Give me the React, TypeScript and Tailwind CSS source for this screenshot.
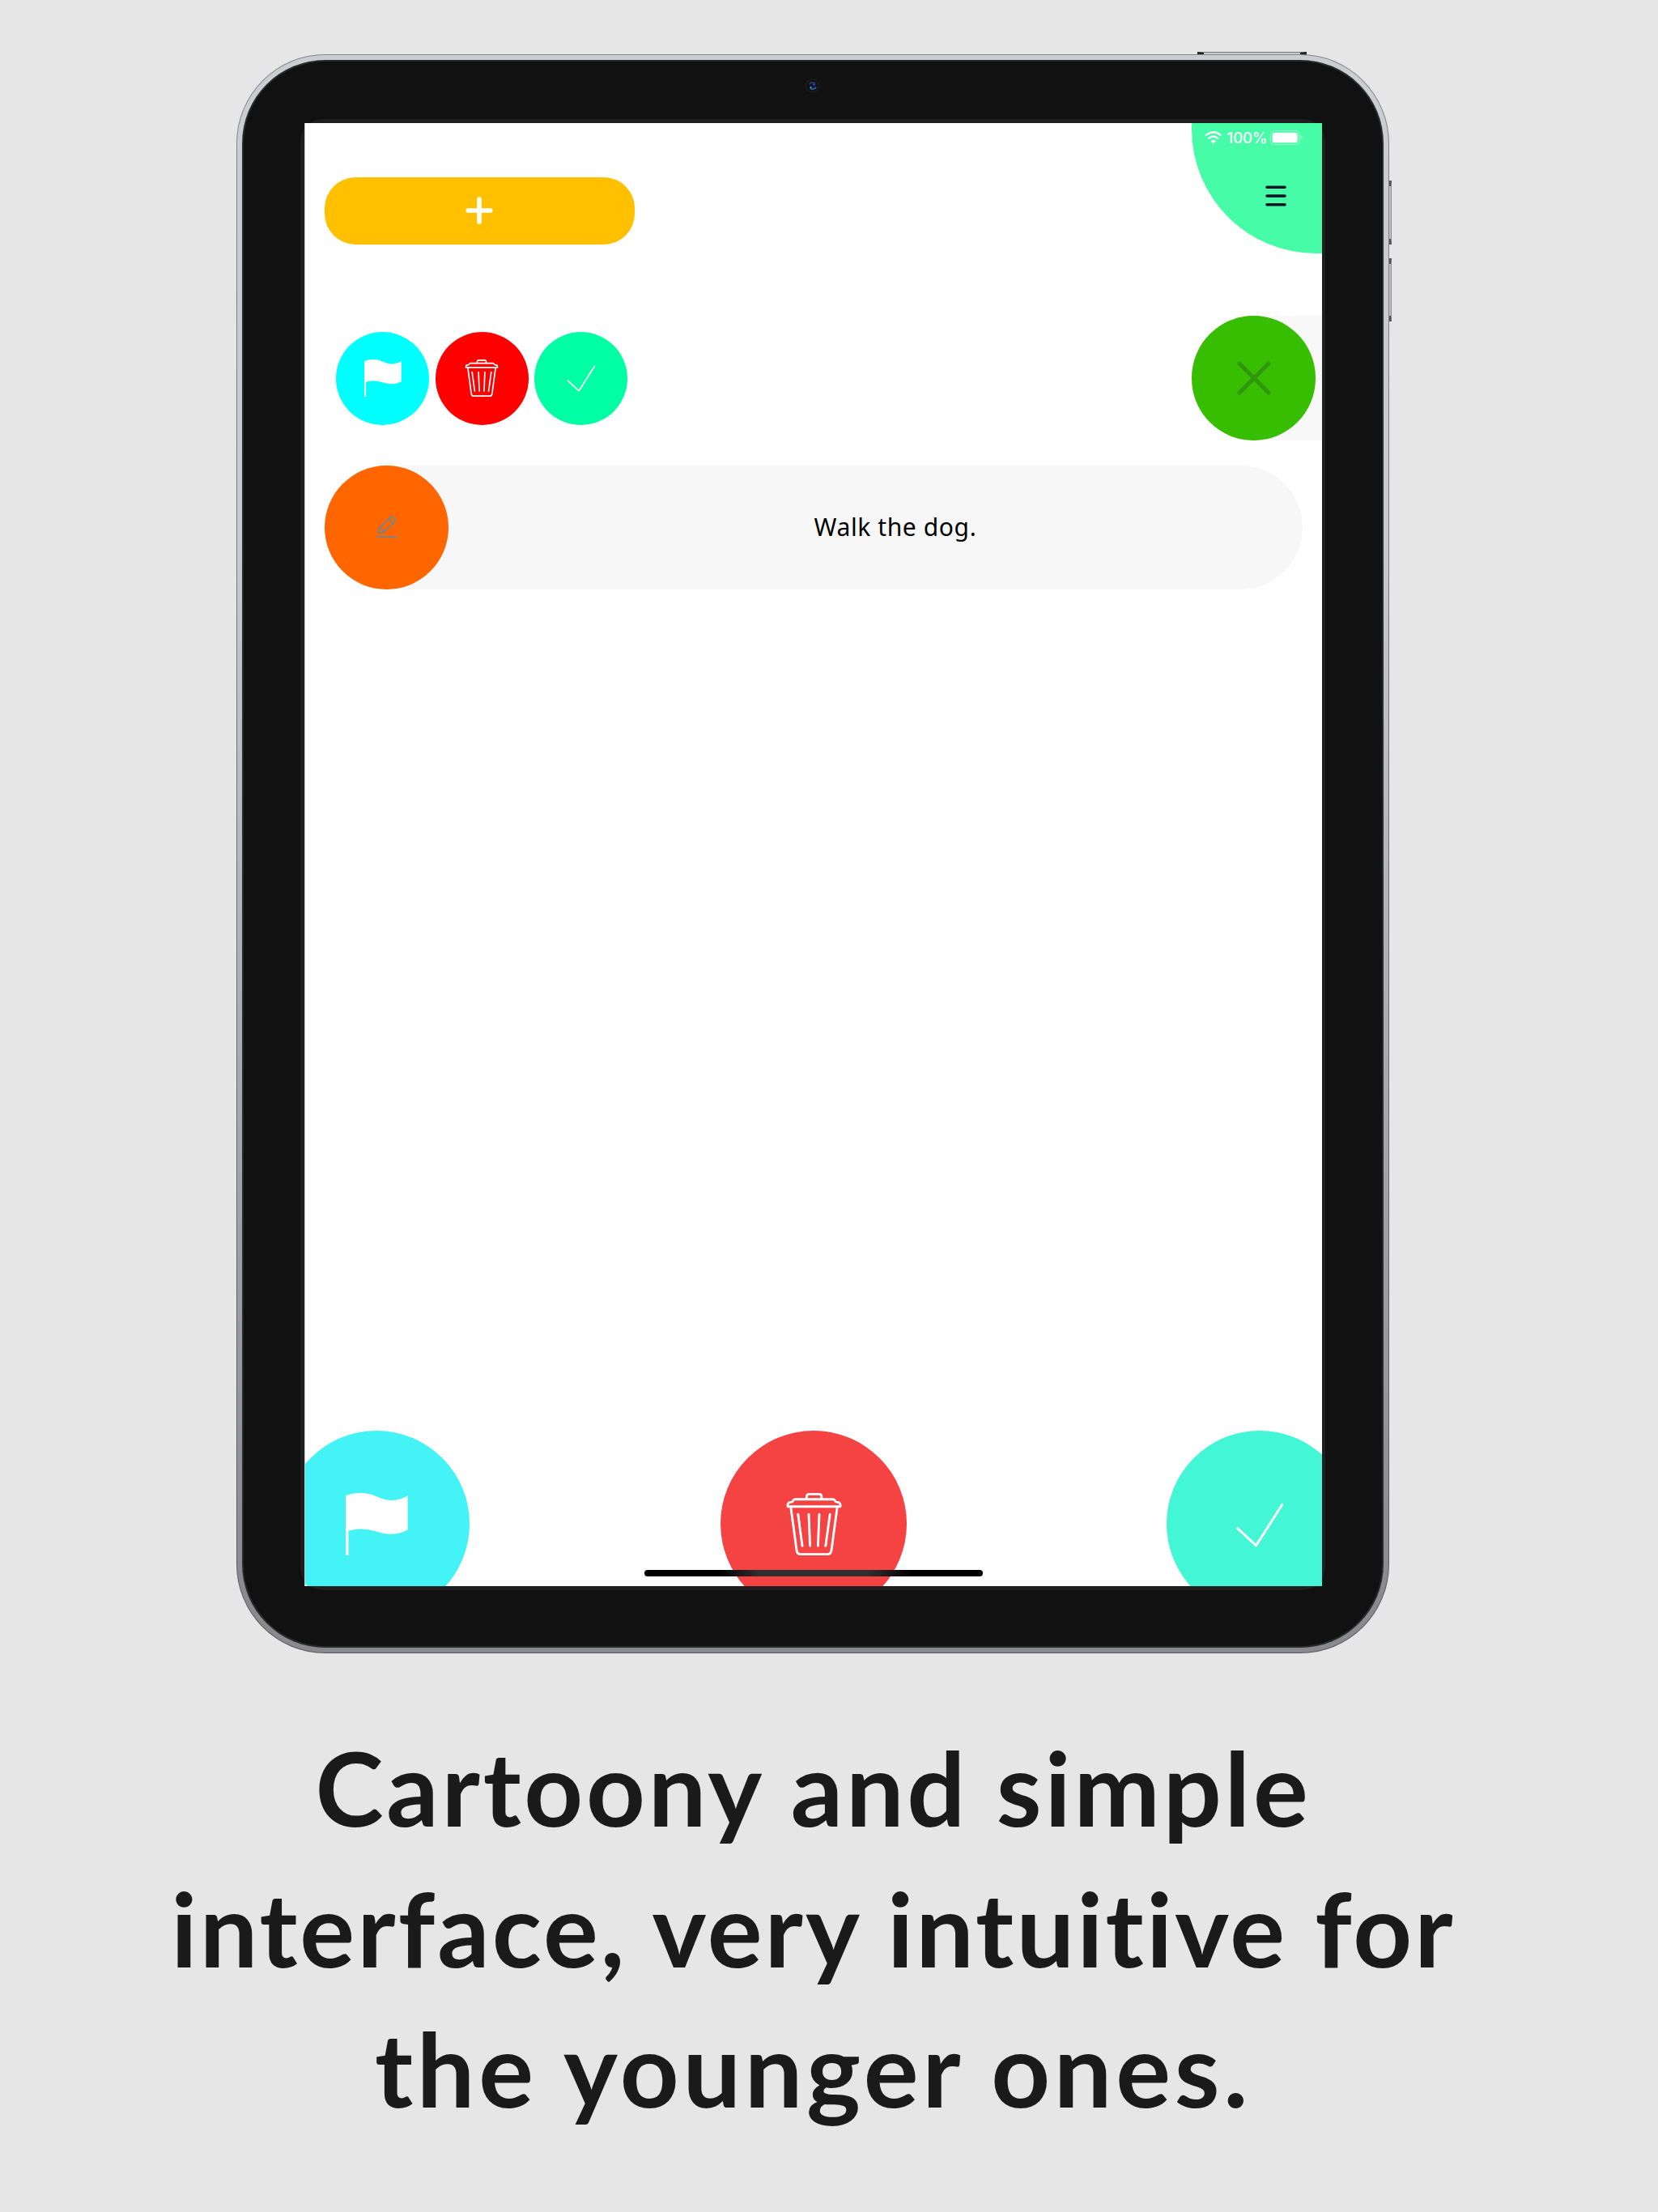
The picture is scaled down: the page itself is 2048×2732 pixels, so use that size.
import type { ReactNode } from "react";

type IconProps = { className?: string };

function FlagIcon({ className }: IconProps) {
  return (
    <svg viewBox="0 0 77 77" className={className} fill="white">
      <path d="M0 3.5C8 0 14 0 19 0C36 0 42 9 57 9C64 9 70 7 76.6 3.3V45.5C70 49 63 50.7 56 50.7C42 50.7 34 44.5 19 44.5C12 44.5 8 45.5 3.5 46.8V77H0Z" />
    </svg>
  );
}

function TrashIcon({ className }: IconProps) {
  return (
    <svg viewBox="0 0 77 77" className={className} fill="none" stroke="white" strokeWidth="2.9" strokeLinecap="round" strokeLinejoin="round">
      <path d="M29.3 7.5V4.5C29.3 2.5 30.5 1.4 32.3 1.4H44.8C46.6 1.4 47.8 2.5 47.8 4.5V7.5" />
      <path d="M6 16.7H71V14.5C71 12.6 69 11.2 66.5 11.1C65.5 11 65 10.7 64.5 9.6C64 8.3 63.3 7.8 62 7.8H15C13.7 7.8 13 8.3 12.5 9.6C12 10.7 11.5 11 10.5 11.1C8 11.2 6 12.6 6 14.5Z" />
      <path d="M9.8 17.5L17 70.5C17.5 74 19 75.6 21.5 75.6H55.5C58 75.6 59.5 74 60 70.5L67.2 17.5" />
      <path d="M18.8 26.3L24 65.3M32 26.3L33.6 65.3M45 26.3L43.4 65.3M58.2 26.3L52.8 65.3" />
    </svg>
  );
}

function CheckIcon({ className }: IconProps) {
  return (
    <svg viewBox="0 0 77 77" className={className} fill="none" stroke="white" strokeWidth="3" strokeLinecap="round" strokeLinejoin="round">
      <path d="M10.6 43.7L33.6 64.8L65.8 14.3" />
    </svg>
  );
}

function PlusIcon() {
  return (
    <svg viewBox="0 0 34 34" className="mr-[1px] mb-[2px] h-[34px] w-[34px]" stroke="white" strokeWidth="5.6" strokeLinecap="round">
      <path d="M17 3V31M3.2 17H30.8" />
    </svg>
  );
}

function CrossIcon() {
  return (
    <svg viewBox="0 0 42 42" className="h-[42px] w-[42px]" stroke="#2f970c" strokeWidth="5" strokeLinecap="round">
      <path d="M3 3L39 39M39 3L3 39" />
    </svg>
  );
}

function EditIcon() {
  return (
    <svg viewBox="0 0 78 84" className="h-[28px] w-[26px]" fill="none" stroke="#8a8076" strokeWidth="6.5" strokeLinecap="round" strokeLinejoin="round">
      <path d="M6 64L10 46L50 6Q56 2 61 7L67 13Q71 18 67 23L29 59Q25 63 18 63Z" />
      <path d="M47 12L63 29M14 46Q24 48 28 58" />
      <path d="M3.5 78.5H74.5" strokeWidth="7" />
    </svg>
  );
}

function WifiIcon() {
  return (
    <svg viewBox="0 0 64 46" className="h-[15.5px] w-[21.5px]" fill="none" stroke="white" strokeWidth="7">
      <path d="M3 16Q32 -9 61 16" />
      <path d="M13.5 27Q32 11 50.5 27" />
      <path d="M32 46L22 36.5Q32 28 42 36.5Z" fill="white" stroke="none" />
    </svg>
  );
}

function BatteryIcon() {
  return (
    <svg viewBox="0 0 120 54" className="h-[18px] w-[40px]" fill="none">
      <rect x="1.5" y="1.5" width="106" height="51" rx="13" stroke="white" strokeOpacity="0.5" strokeWidth="3" />
      <rect x="8" y="8" width="93" height="38" rx="8" fill="white" />
      <path d="M113 18Q119 21 119 27Q119 33 113 36Z" fill="white" fillOpacity="0.55" />
    </svg>
  );
}

function MenuIcon() {
  return (
    <svg viewBox="0 0 26 26" className="h-[26px] w-[26px]" stroke="#0d1424" strokeWidth="3.6" strokeLinecap="round">
      <path d="M2 2.2H24M2 13H24M2 23.7H24" />
    </svg>
  );
}

function RoundButton({ className, children }: { className: string; children: ReactNode }) {
  return <button className={`flex shrink-0 items-center justify-center rounded-full ${className}`}>{children}</button>;
}

function Screen() {
  return (
    <div className="relative flex h-[1807px] w-[1257px] flex-col overflow-hidden border-l border-[#c4c4c4] bg-white">
      {/* corner menu with the status bar over it */}
      <div className="absolute top-[-146px] left-[1095px] h-[307px] w-[307px] rounded-full bg-[#47fca7]" />
      <div className="absolute top-[8px] left-[1111px] flex h-[20px] items-center">
        <WifiIcon />
        <span className="ml-[6px] w-[50px] font-['Inter'] text-[18.5px] leading-[20px] font-medium whitespace-nowrap text-white">100%</span>
        <span className="ml-[3px]">
          <BatteryIcon />
        </span>
      </div>
      <button className="absolute top-[77px] left-[1186px]">
        <MenuIcon />
      </button>

      <div className="pt-[67px] pl-[24px]">
        <button className="flex h-[83px] w-[383px] items-center justify-center rounded-[38px] bg-[#ffc000]">
          <PlusIcon />
        </button>
      </div>

      <div className="mt-[88px] flex h-[154px] items-center pl-[38px]">
        <div className="flex gap-[7.5px]">
          <RoundButton className="h-[115px] w-[115px] bg-[#00ffff]">
            <FlagIcon className="h-[46px] w-[46px]" />
          </RoundButton>
          <RoundButton className="h-[115px] w-[115px] bg-[#ff0000]">
            <TrashIcon className="h-[46px] w-[46px]" />
          </RoundButton>
          <RoundButton className="h-[115px] w-[115px] bg-[#00ffa5]">
            <CheckIcon className="h-[46px] w-[46px]" />
          </RoundButton>
        </div>
        <div className="ml-auto flex h-[153.4px] w-[161px] rounded-l-full bg-[#f8f8f8]">
          <RoundButton className="h-[153.4px] w-[153.4px] bg-[#38be00]">
            <CrossIcon />
          </RoundButton>
        </div>
      </div>

      <div className="mt-[30.5px] mr-[24.5px] ml-[24px] flex h-[153.4px] items-center rounded-full bg-[#f7f7f7]">
        <RoundButton className="h-[153.4px] w-[153.4px] bg-[#ff6600]">
          <EditIcon />
        </RoundButton>
        <p className="flex-1 pl-[49px] text-center font-['Noto_Sans'] text-[30px] leading-[40px] tracking-[0.6px] text-black">Walk the dog.</p>
      </div>

      <div className="mt-auto -mb-[38px] -ml-[27px] flex">
        <RoundButton className="h-[230px] w-[230px] bg-[#43f3f6]">
          <FlagIcon className="h-[77px] w-[77px]" />
        </RoundButton>
        <RoundButton className="ml-[310px] h-[230px] w-[230px] bg-[#f54242]">
          <TrashIcon className="h-[77px] w-[77px]" />
        </RoundButton>
        <RoundButton className="ml-[321px] h-[230px] w-[230px] bg-[#43f6d5]">
          <CheckIcon className="h-[77px] w-[77px]" />
        </RoundButton>
      </div>
      <div className="absolute top-[1787px] left-[419px] h-[8px] w-[418px] rounded-full bg-[linear-gradient(90deg,#000_22%,#303030_34%,#303030_66%,#000_79%)]" />
    </div>
  );
}

function Tablet() {
  return (
    <div className="relative w-[1424px]">
      {/* hardware buttons */}
      <div className="absolute top-[-3px] left-[1187px] h-[6px] w-[135px] border-x-[8px] border-t border-x-[#222] border-t-[#77787d] bg-[#c9cacd]" />
      <div className="absolute top-[156px] right-[-3px] h-[79px] w-[6px] border-y-[7px] border-r border-y-[#55565c] border-r-[#8a8b90] bg-[#c0c1c5]" />
      <div className="absolute top-[252px] right-[-3px] h-[78px] w-[6px] border-y-[7px] border-r border-y-[#55565c] border-r-[#8a8b90] bg-[#c0c1c5]" />
      <div className="relative rounded-[110px] bg-[linear-gradient(180deg,#85868c,#58595c)] p-px">
        <div className="rounded-[109px] bg-[linear-gradient(180deg,#cccdd1,#c9cacd_30%,#8a8a8e_97%)] p-[6px]">
          <div className="rounded-[103px] bg-[#272a2a] p-[2px]">
            <div className="flex h-[1957px] justify-start rounded-[101px] bg-[#111] pt-[71px] pl-[70px]">
              <div className="h-[1817px] w-[1266px] rounded-[28px] bg-[#1f1f1f] pt-[5px] pl-[5px]">
                <Screen />
              </div>
            </div>
          </div>
        </div>
      </div>
      <svg viewBox="0 0 18 18" className="absolute top-[30px] left-[702.5px] h-[18px] w-[18px]" fill="none">
        <circle cx="8.5" cy="9" r="8" stroke="#1b1b1b" strokeWidth="2" />
        <circle cx="9" cy="9" r="5" fill="#0a1630" />
        <path d="M5 7A4.4 4.4 0 0 1 12 6" stroke="#1c4a78" strokeWidth="1.6" />
        <path d="M6 12A4.4 4.4 0 0 0 13 10.500" stroke="#2f6cab" strokeWidth="1.6" />
        <circle cx="10.5" cy="7.500" r="1.200" fill="#7a3b94" />
        <circle cx="6.500" cy="11" r="1.200" fill="#3f93a8" />
      </svg>
    </div>
  );
}

export default function App() {
  return (
    <main className="flex h-[2732px] w-[2048px] flex-col overflow-hidden bg-[#e6e6e6] pt-[67px]">
      <div className="pl-[292px]">
        <Tablet />
      </div>
      <h1 className="mt-[79px] flex w-[2009px] flex-col items-center font-['Lato'] text-[127px] leading-[173.700px] font-bold whitespace-nowrap text-[#1a1a1a]">
        <span className="tracking-[3.8px]">Cartoony and simple</span>
        <span className="tracking-[3.1px]">interface, very intuitive for</span>
        <span className="tracking-[4.7px]">the younger ones.</span>
      </h1>
    </main>
  );
}
